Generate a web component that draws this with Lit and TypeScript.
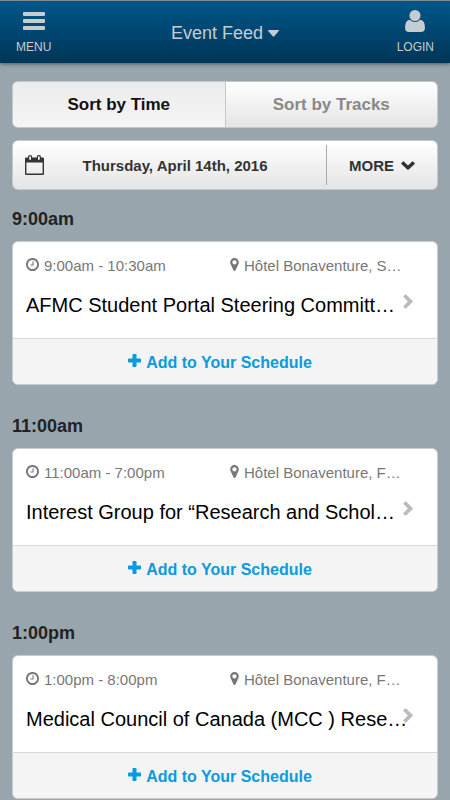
import { LitElement, html, css } from "lit";
import { customElement, property, state } from "lit/decorators.js";
import { classMap } from "lit/directives/class-map.js";

interface Session {
  heading: string;
  time: string;
  place: string;
  title: string;
}

const SESSIONS: Session[] = [
  {
    heading: "9:00am",
    time: "9:00am - 10:30am",
    place: "Hôtel Bonaventure, S…",
    title: "AFMC Student Portal Steering Committ…",
  },
  {
    heading: "11:00am",
    time: "11:00am - 7:00pm",
    place: "Hôtel Bonaventure, F…",
    title: "Interest Group for “Research and Schol…",
  },
  {
    heading: "1:00pm",
    time: "1:00pm - 8:00pm",
    place: "Hôtel Bonaventure, F…",
    title: "Medical Council of Canada (MCC ) Rese…",
  },
];

const reset = css`
  * {
    box-sizing: border-box;
  }
  button {
    margin: 0;
    padding: 0;
    border: 0;
    background: none;
    color: inherit;
    font: inherit;
    cursor: pointer;
  }
  svg {
    display: block;
    flex: none;
    fill: currentColor;
  }
`;

const clockIcon = html`<svg width="13" height="13" viewBox="128 128 1536 1536" aria-hidden="true">
  <path d="M1024 544v448q0 14-9 23t-23 9h-320q-14 0-23-9t-9-23v-64q0-14 9-23t23-9h224v-352q0-14 9-23t23-9h64q14 0 23 9t9 23zm416 352q0-148-73-273t-198-198-273-73-273 73-198 198-73 273 73 273 198 198 273 73 273-73 198-198 73-273zm224 0q0 209-103 385.5t-279.5 279.5-385.5 103-385.5-103-279.5-279.5-103-385.5 103-385.5 279.500-279.500 385.500-103 385.500 103 279.500 279.500 103 385.500z"/>
</svg>`;

const pinIcon = html`<svg width="9" height="13" viewBox="384 128 1024 1536" aria-hidden="true">
  <path d="M1152 640q0-106-75-181t-181-75-181 75-75 181 75 181 181 75 181-75 75-181zm256 0q0 109-33 179l-364 774q-16 33-47.5 52t-67.5 19-67.5-19-46.5-52l-365-774q-33-70-33-179 0-212 150-362t362-150 362 150 150 362z"/>
</svg>`;

const plusIcon = html`<svg width="13" height="13" viewBox="0 0 13 13" aria-hidden="true">
  <path d="M5.200 0h2.600q.7 0 .7.700v3.800h3.800q.7 0 .7.700v2.600q0 .7-.7.700H8.500v3.800q0 .7-.7.700H5.200q-.7 0-.7-.7V8.500H.7q-.7 0-.7-.7V5.200q0-.7.700-.7h3.800V.7q0-.7.700-.7z"/>
</svg>`;

const chevronRight = html`<svg width="10" height="15" viewBox="0 0 10 15" aria-hidden="true">
  <path d="M2.300.400.400 2.300q-.4.400 0 .8L4.900 7.500.400 11.900q-.4.400 0 .8l1.900 1.900q.4.400.8 0L9.700 7.900q.4-.4 0-.8L3.100.400q-.4-.4-.8 0z"/>
</svg>`;

const chevronDown = html`<svg width="14" height="9" viewBox="0 0 14 9" aria-hidden="true">
  <path d="M.3 2.200 2.100.400q.4-.4.800 0L7 4.500 11.100.400q.4-.4.800 0l1.800 1.800q.4.400 0 .8L7.400 8.800q-.4.300-.8 0L.300 3q-.4-.4 0-.8z"/>
</svg>`;

const calendarIcon = html`<svg width="19" height="20" viewBox="0 0 19 20" aria-hidden="true">
  <path fill-rule="evenodd" d="M1 2.500H18Q19 2.500 19 3.500V19q0 1-1 1H1q-1 0-1-1V3.500Q0 2.500 1 2.500zM1.400 7.500v11.100h16.200V7.500z"/>
  <rect x="3.600" y=".6" width="3" height="5" rx="1.500" fill="#f4f4f4" stroke="currentColor" stroke-width="1.200"/>
  <rect x="12.400" y=".6" width="3" height="5" rx="1.500" fill="#f4f4f4" stroke="currentColor" stroke-width="1.200"/>
</svg>`;

const barsIcon = html`<svg width="22" height="22" viewBox="0 0 22 22" aria-hidden="true">
  <rect y="2" width="22" height="4" rx="1"/><rect y="9" width="22" height="4" rx="1"/><rect y="16" width="22" height="4" rx="1"/>
</svg>`;

const userIcon = html`<svg width="20" height="22" viewBox="0 0 20 22" aria-hidden="true">
  <circle cx="10" cy="5.500" r="5.500"/>
  <path d="M4.800 9.800Q0 10.200 0 17.800 0 22 4 22h12q4 0 4-4.200 0-7.600-4.800-8Q13 12 10 12T4.800 9.800z"/>
</svg>`;

const caretIcon = html`<svg width="11" height="7" viewBox="0 0 11 7" aria-hidden="true">
  <path d="M.6 0h9.800q.9.100.4.900L6 6.500q-.5.500-1 0L.200.900Q-.3.100.600 0z"/>
</svg>`;

@customElement("session-card")
export class SessionCard extends LitElement {
  @property({ attribute: false }) session!: Session;

  static styles = [
    reset,
    css`
      :host {
        display: block;
      }
      .heading {
        margin: 0;
        font-size: 18px;
        line-height: 24px;
        font-weight: bold;
        color: #222;
      }
      .card {
        margin-top: 10px;
        border: 1px solid #c9ccce;
        border-radius: 6px;
        background: #fff;
        overflow: hidden;
      }
      .details {
        display: flex;
        align-items: center;
        gap: 8px;
        height: 96px;
        padding: 0 24px 0 13px;
        color: #000;
        text-decoration: none;
      }
      .text {
        flex: 1;
        min-width: 0;
        padding-bottom: 5px;
      }
      .meta {
        display: grid;
        grid-template-columns: 204px 1fr;
        font-size: 15px;
        line-height: 20px;
        color: #777;
        white-space: nowrap;
      }
      .fact {
        display: flex;
        align-items: center;
        gap: 5px;
      }
      .fact svg {
        margin-bottom: 3px;
      }
      .title {
        margin: 0;
        padding-top: 15px;
        font-size: 20px;
        line-height: 28px;
        font-weight: normal;
        white-space: nowrap;
      }
      .arrow {
        width: 10px;
        padding-top: 22px;
        color: #bbb;
      }
      .add {
        display: flex;
        align-items: center;
        justify-content: center;
        gap: 5px;
        width: 100%;
        height: 46px;
        padding: 2px 10px 0 0;
        border-top: 1px solid #d8d8d8;
        background: #f4f4f4;
        color: #099bdd;
        font-size: 16px;
        font-weight: bold;
      }
      .add svg {
        margin-bottom: 4px;
      }
    `,
  ];

  render() {
    const s = this.session;
    return html`
      <h2 class="heading">${s.heading}</h2>
      <article class="card">
        <a class="details" href="#">
          <div class="text">
            <div class="meta">
              <span class="fact">${clockIcon}${s.time}</span>
              <span class="fact">${pinIcon}${s.place}</span>
            </div>
            <h3 class="title">${s.title}</h3>
          </div>
          <span class="arrow">${chevronRight}</span>
        </a>
        <button class="add" type="button">${plusIcon}Add to Your Schedule</button>
      </article>
    `;
  }
}

@customElement("app-root")
export class AppRoot extends LitElement {
  @state() private sort = "time";

  static styles = [
    reset,
    css`
      :host {
        display: block;
        min-height: 100vh;
        background: #99a5ad;
        font-family: "Liberation Sans", Arial, sans-serif;
      }
      .bar {
        display: grid;
        grid-template-columns: 1fr auto 1fr;
        height: 63px;
        padding: 0 16px;
        border-top: 1px solid #7d8b95;
        background: linear-gradient(#005789, #003557);
        box-shadow: 0 1px 4px rgba(0, 0, 0, 0.5);
        color: #c6ccd2;
      }
      .nav {
        display: flex;
        flex-direction: column;
        align-items: center;
        gap: 8px;
        justify-self: start;
        padding-top: 9px;
        font-size: 12px;
        line-height: 14px;
      }
      .login {
        justify-self: end;
      }
      .feed {
        display: flex;
        align-items: center;
        gap: 5px;
        padding-top: 2px;
        font-size: 18px;
      }
      .page {
        display: flex;
        flex-direction: column;
        padding: 18px 12px 0;
      }
      .panel {
        display: flex;
        border: 1px solid #c4c8cb;
        border-radius: 6px;
        background: linear-gradient(#fff, #e4e4e4);
        overflow: hidden;
      }
      .tab {
        flex: 1;
        height: 45px;
        color: #888;
        font-size: 17px;
        font-weight: bold;
      }
      .tab + .tab {
        border-left: 1px solid #c4c8cb;
      }
      .selected {
        background: linear-gradient(#ebebeb, #f5f5f5);
        color: #111;
      }
      .dates {
        align-items: center;
        margin-top: 12px;
        color: #333;
        font-size: 15px;
        font-weight: bold;
      }
      .date {
        display: flex;
        align-items: center;
        flex: 1;
        height: 48px;
        padding-left: 12px;
      }
      .label {
        flex: 1;
        padding-right: 20px;
      }
      .more {
        display: flex;
        align-items: center;
        justify-content: center;
        gap: 7px;
        width: 111px;
        height: 40px;
        border-left: 1px solid #aaa;
      }
      .sessions {
        display: flex;
        flex-direction: column;
        gap: 29px;
        margin-top: 17px;
      }
    `,
  ];

  private tab(id: string, label: string) {
    return html`<button
      type="button"
      class=${classMap({ tab: true, selected: this.sort === id })}
      aria-pressed=${this.sort === id}
      @click=${() => (this.sort = id)}
    >${label}</button>`;
  }

  render() {
    return html`
      <header class="bar">
        <button class="nav" type="button">${barsIcon}<span>MENU</span></button>
        <button class="feed" type="button">Event Feed${caretIcon}</button>
        <button class="nav login" type="button">${userIcon}<span>LOGIN</span></button>
      </header>
      <main class="page">
        <div class="panel">${this.tab("time", "Sort by Time")}${this.tab("tracks", "Sort by Tracks")}</div>
        <div class="panel dates">
          <button class="date" type="button">
            ${calendarIcon}<span class="label">Thursday, April 14th, 2016</span>
          </button>
          <button class="more" type="button">MORE${chevronDown}</button>
        </div>
        <div class="sessions">
          ${SESSIONS.map((s) => html`<session-card .session=${s}></session-card>`)}
        </div>
      </main>
    `;
  }
}
